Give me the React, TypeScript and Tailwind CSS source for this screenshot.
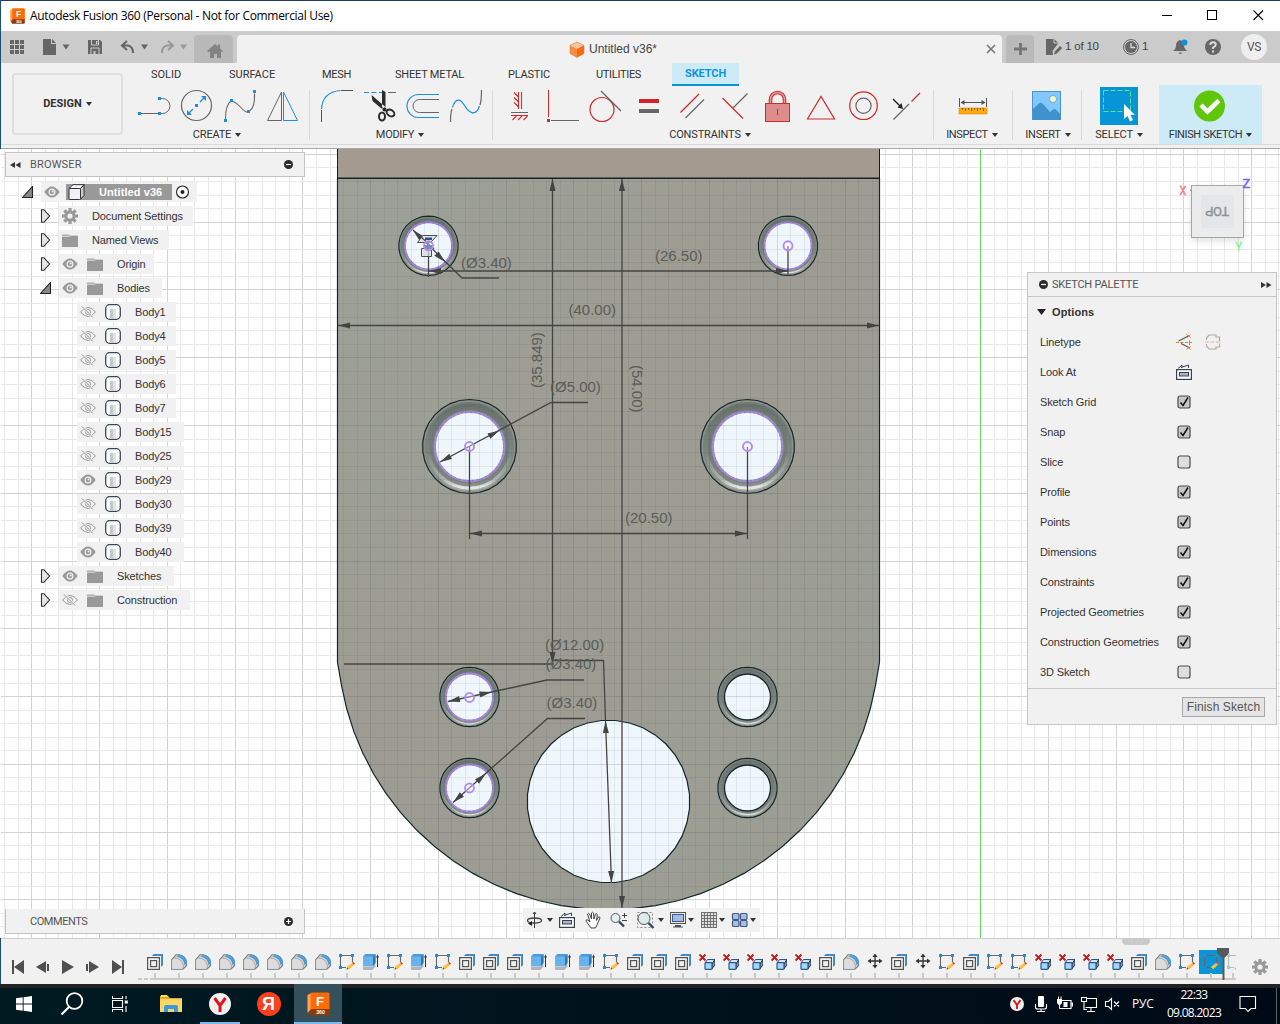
import React from "react";

type BoxProps = { b: string; children?: React.ReactNode; className?: string };

/* Icon whose viewBox also sets its pixel size. */
function Ic({ b, children, className = "" }: BoxProps) {
  const [, , w, h] = b.split(" ");
  return (
    <svg viewBox={b} width={w} height={h} fill="none" className={`block shrink-0 ${className}`}>
      {children}
    </svg>
  );
}

const G = "#666666";
const B = "#1a8fe3";
const R = "#d02a2a";

function Caret() {
  return (
    <svg width="6" height="4" viewBox="0 0 6 4" className="inline-block shrink-0">
      <path d="M0 0h6L3 4z" fill="#333" />
    </svg>
  );
}

/* ---------- window chrome ---------- */

function FusionLogo({ size }: { size: number }) {
  return (
    <svg width={size} height={size + 1} viewBox="0 0 22 24" className="block shrink-0">
      <path d="M0 3l4-2v16l-4 4z" fill="#ffa552" />
      <rect x="3" y="0.5" width="19" height="18" rx="1.5" fill="#ff6b00" />
      <path d="M1 20l3-3h18v5q0 1.5-1.5 1.5H3z" fill="#8f3a04" />
      <text x="12.6" y="13.8" textAnchor="middle" fontFamily="Liberation Sans, sans-serif" fontWeight="700" fontSize="13" fill="#fff">F</text>
      <text x="13" y="22.3" textAnchor="middle" fontFamily="Liberation Sans, sans-serif" fontWeight="700" fontSize="5.2" fill="#fff">360</text>
    </svg>
  );
}

function TitleBar() {
  return (
    <div className="flex h-[31px] shrink-0 items-center border-t border-[#1d3f63] bg-white pl-[9px] text-black">
      <FusionLogo size={15} />
      <span className="ml-[5px] flex-1 whitespace-nowrap font-['Open_Sans',sans-serif] text-[12px] tracking-[-0.31px]">
        Autodesk Fusion 360 (Personal - Not for Commercial Use)
      </span>
      <Ic b="1150 0 130 30">
        <g stroke="#000" strokeWidth="1" shapeRendering="crispEdges">
          <path d="M1162 14.500h10" />
          <rect x="1207.500" y="9.500" width="9" height="9" />
        </g>
        <path d="M1253.500 9.500l9.500 9.500M1263 9.500l-9.500 9.500" stroke="#000" strokeWidth="1.100" />
      </Ic>
    </div>
  );
}

function TabBar() {
  return (
    <div className="flex h-8 shrink-0 items-end bg-[#cbcbcb] text-[12px] text-[#444]">
      <Ic b="1 31 38 32">
        {[0, 1, 2].map((r) =>
          [0, 1, 2].map((c) => <rect key={`${r}${c}`} x={10 + c * 5} y={40 + r * 5} width="4" height="4" fill={G} />)
        )}
      </Ic>
      <Ic b="39 31 38 32">
        <path d="M43 39h8v5h5v11H43zM52 39l4 4h-4z" fill={G} />
        <path d="M62.500 44.500h7l-3.500 5z" fill={G} />
      </Ic>
      <Ic b="77 31 38 32">
        <path d="M88 40h12l2 2v12H88z" fill={G} />
        <path d="M91.500 40v5h7v-5M91 54v-6h8v6" stroke="#cbcbcb" strokeWidth="1" />
        <path d="M96 41h1.500v3H96zM93.500 51h2v3h-2z" fill="#cbcbcb" />
      </Ic>
      <Ic b="115 31 40 32">
        <path d="M127 41l-5 4.500 5 4.500M122 45.500h6q5 1 5 7.500" stroke={G} strokeWidth="2" />
        <path d="M141 44.500h7l-3.500 5z" fill={G} />
      </Ic>
      <Ic b="155 31 39 32">
        <path d="M168 41l5 4.500-5 4.500M173 45.500h-6q-5 1-5 7.500" stroke="#999" strokeWidth="2" />
        <path d="M180 44.500h7l-3.500 5z" fill="#999" />
      </Ic>
      <div className="mr-1 flex h-7 w-[39px] items-center justify-center rounded-t bg-[#b9b9b9] pl-[3px] pt-0.5">
        <Ic b="206 42 18 16">
          <path d="M207 51l8-7 3 2.500v-2h2v4l3 2.500-1 1-1-.8V58h-4v-4h-3v4h-4v-6.800l-1.500 1z" fill="#838383" />
        </Ic>
      </div>
      <div className="flex h-7 w-[765px] items-center rounded-t bg-[#f1f1f1]">
        <div className="flex flex-1 items-center justify-center gap-1 pl-[5px]">
          <Ic b="569 41 16 17">
            <path d="M577 42l7 3.500v8l-7 4-7-4v-8z" fill="#ff8a3a" />
            <path d="M570 45.500l7-3.500 7 3.500-7 3.500z" fill="#fcc79c" />
            <path d="M577 49l7-3.500v8l-7 4z" fill="#f46c0e" />
            <path d="M577 42l7 3.500v8l-7 4-7-4v-8z" stroke="#c98a5c" strokeWidth=".6" />
          </Ic>
          <span>Untitled v36*</span>
        </div>
        <Ic b="984 42 18 14">
          <path d="M987 45l8 8M995 45l-8 8" stroke="#777" strokeWidth="1.600" />
        </Ic>
      </div>
      <div className="ml-1 flex h-7 w-7 items-center justify-center rounded-t bg-[#bababa]">
        <Ic b="0 0 14 14"><path d="M7.500 1v12M1 7h13" stroke="#777" strokeWidth="3" /></Ic>
      </div>
      <div className="flex h-8 shrink-0 items-center">
        <Ic b="1034 31 29 32">
          <path d="M1046 39h8l4.500 4-6 8 .5 4h-7z" fill={G} />
          <path d="M1054 39v4h5" stroke="#cbcbcb" />
          <path d="M1054 54.500l.8-3 5.200-5.500 2.200 2-5.400 5.500z" fill={G} />
        </Ic>
        <span className="ml-[2px] w-[57px] shrink-0 whitespace-nowrap text-[11.500px] tracking-[-0.2px]">1 of 10</span>
        <Ic b="1122 31 18 32">
          <circle cx="1131" cy="47" r="7.500" stroke={G} />
          <circle cx="1131" cy="47" r="6" fill={G} />
          <path d="M1131 43v4.500h4" stroke="#ddd" strokeWidth="1.300" />
        </Ic>
        <span className="ml-0.5 w-[28px] shrink-0 text-[11.500px]">1</span>
        <Ic b="1170 31 28 32">
          <path d="M1173 51q3-2 3-6 .5-4 4-5 3.500 1 4 5 0 4 3.500 6zM1178.500 52.500h3.500q-1.700 3-3.500 0z" fill={G} />
          <circle cx="1184.500" cy="42.500" r="3" fill="#0a94dd" />
        </Ic>
        <Ic b="1198 31 27 32">
          <circle cx="1213" cy="47" r="8" fill={G} />
          <path d="M1210.300 45q0-2.700 2.700-2.700 2.800 0 2.800 2.300 0 1.500-2.700 3v1.400" stroke="#ddd" strokeWidth="1.900" />
          <rect x="1212" y="50.500" width="2" height="2" fill="#ddd" />
        </Ic>
        <span className="ml-[16px] flex h-[26px] w-[26px] shrink-0 items-center justify-center rounded-full bg-[#efefef] font-[Roboto,sans-serif] text-[12px] tracking-[-0.3px] text-[#555]">VS</span>
      </div>
    </div>
  );
}

/* ---------- ribbon ---------- */

type GroupProps = { label: string; w: string; shift?: string; children: React.ReactNode };

function Group({ label, w, shift = "tracking-[-0.2px]", children }: GroupProps) {
  return (
    <div className={`flex flex-col items-center ${w}`}>
      <div className="flex h-[38px] w-full justify-center">{children}</div>
      <div className={`mt-px flex h-[18px] items-center gap-1 whitespace-nowrap ${shift}`}>
        <span>{label}</span>
        <Caret />
      </div>
    </div>
  );
}

const Sep = () => <div className="mt-[3px] h-[50px] w-px shrink-0 bg-[#d9d9d9]" />;

function Sq({ x, y, c = B }: { x: number; y: number; c?: string }) {
  return <rect x={x - 1.5} y={y - 1.5} width="3" height="3" fill={c} />;
}

function Ribbon() {
  return (
    <div className="flex h-[86px] shrink-0 border-b border-[#a9a9a9] bg-[#f1f1f1] font-[Roboto,sans-serif] text-[11px] text-[#333]">
      <div className="flex h-[82px] flex-1 border-b border-[#dadada]">
        <div className="ml-[11px] mt-[10px] flex h-[62px] w-[111px] items-center justify-center gap-1 rounded border-2 border-[#dedede] text-[11px] font-bold">
          DESIGN <Caret />
        </div>
        <div className="flex flex-1 flex-col">
          <div className="flex h-[23px] items-center leading-[22px]">
            <span className="ml-[28px] w-[78px]">SOLID</span>
            <span className="w-[93px]">SURFACE</span>
            <span className="w-[73px] tracking-[-0.3px]">MESH</span>
            <span className="w-[113px] tracking-[-0.2px]">SHEET METAL</span>
            <span className="w-[88px] tracking-[-0.2px]">PLASTIC</span>
            <span className="w-[76px] tracking-[-0.3px]">UTILITIES</span>
            <span className="h-full w-[67px] border-b-2 border-[#0696d7] bg-[#cdeaf7] text-center font-bold tracking-[-0.1px] text-[#0a96dd]">SKETCH</span>
          </div>
          <div className="flex pt-px">
            <Group label="CREATE" w="w-[186px] pl-1" shift="-ml-0.5 tracking-[-0.2px]">
              <Ic b="133 87 41 38">
                <path d="M141 113.500h17M161 98.500h1.500a7.500 7.500 0 0 1 0 15H161" stroke={G} />
                <Sq x={139.500} y={113.500} /><Sq x={159.500} y={113.500} /><Sq x={159.500} y={98.500} />
              </Ic>
              <Ic b="174 87 45 38">
                <circle cx="196.500" cy="105.500" r="15" stroke={G} strokeWidth="1.200" />
                <path d="M189 113l4-4M200 102l4-4" stroke={B} strokeWidth="1.200" />
                <path d="M187 115v-5l5 5zM206 96v5l-5-5z" fill={B} />
                <Sq x={196.500} y={105.500} />
              </Ic>
              <Ic b="219 87 43 38">
                <path d="M225.500 119q0-14 5-17.500M233 101.500q4 1.500 8 6t6 4.500M250 110.500q5-3 4.500-17" stroke={G} strokeWidth="1.100" />
                <Sq x={225.500} y={120.500} /><Sq x={231.500} y={100.500} /><Sq x={248.500} y={111.500} /><Sq x={254.500} y={91.500} />
              </Ic>
              <Ic b="262 87 41 38">
                <path d="M281.500 92v28.500h-14z" stroke={G} />
                <path d="M283.500 92v28.500h14z" stroke={B} />
              </Ic>
            </Group>
            <Sep />
            <Group label="MODIFY" w="w-[182px]" shift="-ml-0.5 tracking-[-0.3px]">
              <Ic b="316 87 42 38">
                <path d="M321.500 122v-12M341 90.500h12" stroke="#555" />
                <path d="M321.500 109q1-17 19-18.500" stroke={B} strokeWidth="1.200" />
              </Ic>
              <Ic b="358 87 44 38">
                <path d="M364 92.500h21" stroke={B} strokeDasharray="5 2.500" />
                <path d="M388 92.500h8" stroke={G} />
                <path d="M382 90l3.500 2v15l-1.500 2-2-2zM371.500 95l1 6 9 7.500 4.500-1z" fill="#2b2b2b" />
                <ellipse cx="382" cy="116.500" rx="3" ry="4" stroke="#2b2b2b" strokeWidth="2" />
                <ellipse cx="390.500" cy="113" rx="4.200" ry="3" stroke="#2b2b2b" strokeWidth="2" transform="rotate(35 390.500 113)" />
                <circle cx="384.500" cy="109.500" r="2" fill="#2b2b2b" />
              </Ic>
              <Ic b="402 87 42 38">
                <path d="M439 94.500h-20.500a11.500 11.500 0 0 0 0 23H439" stroke={B} strokeWidth="1.200" />
                <path d="M439 99.500h-19.500a6.500 6.500 0 0 0 0 13H439" stroke={G} />
              </Ic>
              <Ic b="444 87 42 38">
                <path d="M450.500 122q0-9 1.500-13M480 105q1.500-4 1.500-15" stroke={G} strokeWidth="1.200" />
                <path d="M452.500 107.500c3-10 8-9 12-2s11 12 15 .5" stroke={B} strokeWidth="1.200" />
              </Ic>
            </Group>
            <Sep />
            <Group label="CONSTRAINTS" w="w-[440px]" shift="-ml-[6px] tracking-[-0.15px]">
              <Ic b="499 87 42 38">
                <path d="M521.500 92v17M511 112.500h17" stroke={G} strokeWidth="1.200" />
                <path d="M518.500 92v17M514 92.500l4.500 4.500M514 97.500l4.500 4.500M514 102.500l4.500 4.500M511 115.500h17M512.500 120l4-4M518 120l4-4M523.500 120l4-4" stroke={R} strokeWidth="1.100" />
              </Ic>
              <Ic b="541 87 46 38">
                <path d="M548.500 90v27" stroke={R} /><Sq x={548.500} y={120.500} c={R} />
                <path d="M551 120.500h28" stroke={G} />
              </Ic>
              <Ic b="587 87 44 38">
                <circle cx="602" cy="109.500" r="12" stroke={R} strokeWidth="1.200" />
                <path d="M601 91l20 20" stroke={G} strokeWidth="1.200" />
              </Ic>
              <Ic b="631 87 42 38">
                <rect x="639" y="99" width="20" height="4" fill="#cf2727" />
                <rect x="639" y="109" width="20" height="4" fill={G} />
              </Ic>
              <Ic b="673 87 42 38">
                <path d="M680.500 112.500l18.500-18.500" stroke={R} strokeWidth="1.200" />
                <path d="M685.500 118l18.500-18.500" stroke={G} strokeWidth="1.200" />
              </Ic>
              <Ic b="715 87 42 38">
                <path d="M722.500 98l20.500 20.500" stroke={R} strokeWidth="1.200" />
                <path d="M733 108l14.500-14.500" stroke={G} strokeWidth="1.200" />
              </Ic>
              <Ic b="757 87 42 38">
                <path d="M770.500 103v-3.500a7 7 0 0 1 14 0v3.500" stroke={R} strokeWidth="3.600" />
                <path d="M770.500 103v-3.500a7 7 0 0 1 14 0v3.500" stroke="#e49a9a" strokeWidth="1.500" />
                <rect x="765.500" y="103.500" width="24" height="18" fill="#df8c8c" stroke={R} />
                <path d="M777.500 109v6" stroke={R} />
              </Ic>
              <Ic b="799 87 43 38"><path d="M807.500 119h27l-13.500-22.500z" stroke={R} strokeWidth="1.200" /></Ic>
              <Ic b="842 87 42 38">
                <circle cx="863.500" cy="105.700" r="13.800" stroke={R} strokeWidth="1.200" />
                <circle cx="863.500" cy="105.700" r="7.600" stroke={G} strokeWidth="1.200" />
              </Ic>
              <Ic b="884 87 43 38">
                <path d="M893.500 119.500l15.500-15.500" stroke={G} strokeWidth="1.200" />
                <path d="M911.500 101.500l8.500-8.500" stroke={R} strokeWidth="1.200" />
                <path d="M893 99l7 7" stroke="#222" strokeWidth="1.400" />
                <path d="M903 109l-5.500-1.500 4-4.500z" fill="#222" />
              </Ic>
            </Group>
            <Sep />
            <Group label="INSPECT" w="w-[78px]" shift="-ml-0.5 tracking-[-0.35px]">
              <Ic b="957 87 32 38">
                <path d="M959.500 98v9M986.500 98v9M961 102.500h24" stroke="#555" />
                <path d="M960.500 102.500l4-2.500v5zM985.500 102.500l-4-2.500v5z" fill="#555" />
                <rect x="959" y="108" width="28" height="6" fill="#ffab0d" stroke="#d98a00" strokeWidth=".6" />
                <path d="M962.500 108v2M965.500 108v3M968.500 108v2M971.500 108v3M974.500 108v2M977.500 108v3M980.500 108v2M983.500 108v3" stroke="#7a5200" strokeWidth=".8" />
              </Ic>
            </Group>
            <Sep />
            <Group label="INSERT" w="w-[68px]" shift="ml-0.5 tracking-[-0.2px]">
              <Ic b="1031 87 32 38">
                <rect x="1032.500" y="91.500" width="28" height="28" fill="#80c8ff" stroke="#4a94cc" />
                <path d="M1033 109l6-5.500q2-1.500 4 .5l7 8 3-2.500 2-.5 5.500 5v6H1033z" fill="#3f92cc" />
                <circle cx="1053" cy="99" r="3.500" fill="#f6f6cc" stroke="#5f9ab8" strokeWidth=".7" />
              </Ic>
            </Group>
            <Sep />
            <Group label="SELECT" w="w-[77px]" shift="-ml-[3px] tracking-[-0.15px]">
              <Ic b="1100 87 38 38" className="-ml-[3px] bg-[#0696d7]">
                <rect x="1103.500" y="90.500" width="27" height="21" stroke="#5fe08a" strokeDasharray="5 2" />
                <path d="M1124 104v15l3.500-3 2.500 5.500 3-1.500-2.500-5h4.500z" fill="#fff" />
              </Ic>
            </Group>
            <div className="-mt-[2px] flex h-[59px] flex-col items-center bg-[#cdeaf7] pt-[2px]">
              <Group label="FINISH SKETCH" w="w-[103px]" shift="tracking-[-0.35px]">
                <Ic b="1193 87 34 38" className="-ml-px">
                  <circle cx="1209.500" cy="106" r="15.500" fill="#5fc60a" />
                  <path d="M1201 105l6.500 6.500L1219 100.500" stroke="#fff" strokeWidth="4.500" />
                </Ic>
              </Group>
            </div>
          </div>
        </div>
      </div>
    </div>
  );
}

/* ---------- drawing canvas ---------- */

function poly(cx: number, cy: number, r: number, n: number) {
  return Array.from({ length: n }, (_, i) => {
    const a = ((i + 0.5) * 2 * Math.PI) / n;
    return `${(cx + r * Math.cos(a)).toFixed(1)},${(cy + r * Math.sin(a)).toFixed(1)}`;
  }).join(" ");
}

function lines(origin: number, from: number, to: number) {
  const out: { p: number; major: boolean }[] = [];
  const step = 13.554;
  const first = Math.ceil((from - origin) / step);
  for (let i = first; origin + i * step <= to; i++) out.push({ p: Math.floor(origin + i * step) + 0.5, major: i % 5 === 0 });
  return out;
}

function Arrow({ x, y, a }: { x: number; y: number; a: number }) {
  return <path d="M0 0l-12-3v6z" transform={`translate(${x} ${y}) rotate(${a})`} fill="#444443" />;
}

type HoleProps = { x: number; y: number; o: number; i: number; sel?: boolean };

function Hole({ x, y, o, i, sel = true }: HoleProps) {
  const t = o - i;
  return (
    <g>
      <polygon points={poly(x, y, o, 30)} fill="#8e928b" stroke="#15262b" strokeWidth="1.200" />
      <circle cx={x} cy={y} r={i + t * 0.5} fill="none" stroke="url(#bevel)" strokeWidth={t * 0.6} />
      <circle cx={x} cy={y} r={i + t * 0.75} fill="none" stroke="#7c827c" strokeOpacity=".6" strokeWidth="1.500" />
      <circle cx={x} cy={y} r={i + t * 0.28} fill="none" stroke="#6f7874" strokeOpacity=".75" strokeWidth={t * 0.3} />
      <circle cx={x} cy={y} r={i} fill="#eff7fd" stroke={sel ? "#a78be6" : "#15262b"} strokeWidth={sel ? 1.8 : 1.3} />
      {sel && <circle cx={x} cy={y} r={i - 0.3} fill="none" stroke="#6a4fb0" strokeOpacity=".55" strokeWidth=".8" strokeDasharray="1.500 3" />}
    </g>
  );
}

/* Plate silhouette: straight flanks closed by a faceted half circle. */
const outline = (() => {
  const pts = ["337.5,178.5"];
  for (let d = 5; d <= 175; d += 5) {
    const a = (d * Math.PI) / 180;
    const x = d === 5 ? 337.5 : d === 175 ? 879.5 : 608.5 - 271 * Math.cos(a);
    pts.push(`${x.toFixed(1)},${(638.7 + 271 * Math.sin(a)).toFixed(1)}`);
  }
  pts.push("879.5,178.5");
  return pts.join(" ");
})();

const dims: [string, number, number, number][] = [
  ["(Ø3.40)", 461, 267.500, 0],
  ["(26.50)", 655, 260.500, 0],
  ["(40.00)", 568.500, 315, 0],
  ["(Ø5.00)", 550, 391.500, 0],
  ["(20.50)", 625, 523, 0],
  ["(Ø12.00)", 545, 650, 0],
  ["(Ø3.40)", 545.500, 669, 0],
  ["(Ø3.40)", 546.500, 708, 0],
  ["(35.849)", 541.500, 388, -90],
  ["(54.00)", 632, 365, 90],
];

const centers = [
  [428.500, 245.800], [788, 245.800], [469.500, 446.500], [747.500, 446.500], [469.500, 697.500], [469.500, 788],
];

function Drawing() {
  const xs = lines(980.6, 2, 1280);
  const ys = lines(154.4, 149, 938);
  return (
    <svg viewBox="0 149 1280 789" width="1280" height="789" className="absolute inset-0 block">
      <defs>
        <linearGradient id="bevel" x1="0" y1="0" x2="0" y2="1">
          <stop offset="0" stopColor="#68706c" />
          <stop offset="0.6" stopColor="#7f8681" />
          <stop offset="0.9" stopColor="#b0b4ae" />
          <stop offset="1" stopColor="#e4e6e3" />
        </linearGradient>
        <linearGradient id="plate" x1="0" y1="0" x2="1" y2="1">
          <stop offset="0" stopColor="#9da197" />
          <stop offset="0.45" stopColor="#9d9c92" />
          <stop offset="1" stopColor="#9b9e94" />
        </linearGradient>
      </defs>
      <rect x="0" y="149" width="1280" height="789" fill="#fff" />
      <rect x="337.500" y="140" width="542" height="38" fill="#a59a90" stroke="#1c1c1c" />
      <g shapeRendering="crispEdges">
        {[...xs].sort((a, b) => Number(a.major) - Number(b.major)).map((l) => (
          <path key={`x${l.p}`} d={`M${l.p} ${l.p > 337 && l.p < 880 ? 640 : 149}V938`} stroke={l.major ? "#d3d3d3" : "#e9e9e9"} />
        ))}
        {[...ys].sort((a, b) => Number(a.major) - Number(b.major)).map((l) => (
          <path key={`y${l.p}`} d={l.p > 179 ? `M1 ${l.p}h1279` : `M1 ${l.p}h336M880 ${l.p}h400`} stroke={l.major ? "#d3d3d3" : "#e9e9e9"} />
        ))}
      </g>
      <polygon points={outline} fill="url(#plate)" stroke="#15262b" strokeWidth="1.200" />
      <Hole x={428.500} y={245.800} o={29.700} i={23.500} />
      <Hole x={788} y={245.800} o={29.700} i={23.500} />
      <Hole x={469.500} y={446.500} o={47} i={34.500} />
      <Hole x={747.500} y={446.500} o={47} i={34.500} />
      <Hole x={469.500} y={697} o={29.700} i={23.500} />
      <Hole x={469.500} y={788} o={29.700} i={23.500} />
      <Hole x={747.500} y={697} o={29.700} i={23} sel={false} />
      <Hole x={747.500} y={788} o={29.700} i={23} sel={false} />
      <polygon points={poly(608.5, 801.5, 81.3, 36)} fill="#eff7fd" stroke="#15262b" strokeWidth="1.200" />
      <clipPath id="inside"><polygon points={outline} /></clipPath>
      <g shapeRendering="crispEdges" clipPath="url(#inside)" stroke="#3c4e56">
        {xs.filter((l) => l.p > 337 && l.p < 880).map((l) => (
          <path key={`p${l.p}`} d={`M${l.p} 179v759`} strokeOpacity={l.major ? 0.18 : 0.09} />
        ))}
        {ys.filter((l) => l.p > 179).map((l) => (
          <path key={`q${l.p}`} d={`M338 ${l.p}h541`} strokeOpacity={l.major ? 0.18 : 0.09} />
        ))}
      </g>
      <path d="M980.500 149v789" stroke="#62dd62" shapeRendering="crispEdges" />
      <g stroke="#444443" strokeWidth="1.300" fill="none">
        <path d="M337.500 325.500h542M622 179v729M552.500 179v484" />
        <path d="M429 271h359M428.500 246v31M788 246v30" />
        <path d="M413 230l49 48h37" />
        <path d="M469.500 447v92M747.500 447v92M470 533.500h277" />
        <path d="M440 462l111-59.500h37" />
        <path d="M344 664h210M552 660.500h51.500l2 60M605.500 721l6 162" />
        <path d="M448 701.500L547 680h37M453 802.500l94.500-84h37.500" />
      </g>
      <Arrow x={338} y={325.500} a={180} /><Arrow x={879} y={325.500} a={0} />
      <Arrow x={622} y={179} a={-90} /><Arrow x={622} y={908} a={90} />
      <Arrow x={552.500} y={179} a={-90} /><Arrow x={552.500} y={664} a={90} />
      <Arrow x={429} y={271} a={180} /><Arrow x={788} y={271} a={0} />
      <Arrow x={470} y={533.500} a={180} /><Arrow x={747} y={533.500} a={0} />
      <Arrow x={440} y={462} a={152} /><Arrow x={499.500} y={430.500} a={-28} />
      <Arrow x={413} y={230} a={225} /><Arrow x={445} y={262} a={45} />
      <Arrow x={448} y={701.500} a={168} /><Arrow x={491.500} y={692} a={-12} />
      <Arrow x={453} y={802.500} a={138} /><Arrow x={486} y={773.500} a={-42} />
      <Arrow x={605.500} y={721} a={-92} /><Arrow x={611.500} y={883} a={88} />
      <g stroke="#4a4f4d" fill="none">
        <path d="M417.500 242.500h13l6.500-7h-14z" fill="#e6e9ec" />
        <path d="M421.500 248.500h10v8h-10z" fill="#d9dcdc" fillOpacity=".7" />
        <path d="M420 236l14 13" strokeWidth="1.300" />
      </g>
      <path d="M425 237.500h7v2.500h-7zM424 245h9v3h-9z" fill="#2f4f8f" />
      {centers.map(([x, y]) => (
        <circle key={`${x}-${y}`} cx={x} cy={y} r="4.500" fill="#fff" fillOpacity=".35" stroke="#b48cf0" strokeWidth="1.900" />
      ))}
      <g fontFamily="Liberation Sans, Arial, sans-serif" fontSize="15" fill="#5a5c59">
        {dims.map(([t, x, y, a]) => (
          <text key={`${t}${y}`} transform={`translate(${x} ${y}) rotate(${a})`}>{t}</text>
        ))}
      </g>
    </svg>
  );
}

/* ---------- browser tree ---------- */

function Eye({ off = false }: { off?: boolean }) {
  return off ? (
    <Ic b="0 0 16 12">
      <path d="M0.500 6q7.500-9 15 0-7.500 9-15 0z" stroke="#9a9a9a" />
      <circle cx="8" cy="6" r="2.500" stroke="#9a9a9a" />
      <path d="M2 0.500l11.500 11" stroke="#f1f1f1" strokeWidth="2.400" />
      <path d="M2 0.500l11 11" stroke="#8a8a8a" strokeWidth=".9" />
    </Ic>
  ) : (
    <Ic b="0 0 16 12">
      <path d="M0.300 6q7.700-11 15.400 0-7.700 11-15.400 0z" fill="#999" />
      <circle cx="8" cy="6" r="2.900" stroke="#f1f1f1" strokeWidth="1.200" />
      <circle cx="8.600" cy="5.500" r="1" fill="#f1f1f1" />
    </Ic>
  );
}

function Folder() {
  return (
    <Ic b="0 0 16 13">
      <path d="M0 0.500h7l1 1h8v1H0z" fill="#b0b0b0" />
      <path d="M0 3h7l2-1h7v11H0z" fill="#999" />
    </Ic>
  );
}

function Body() {
  return (
    <Ic b="0 0 16 16">
      <rect x="0.700" y="0.700" width="14.600" height="14.600" rx="4" fill="#fff" stroke="#3a4556" strokeWidth="1.300" />
      <rect x="5" y="5" width="3.500" height="9" fill="#c3c7cb" />
      <rect x="8.500" y="5" width="2.500" height="9" fill="#e0e2e4" />
    </Ic>
  );
}

function Gear({ size, hole }: { size: number; hole: string }) {
  return (
    <svg width={size} height={size} viewBox="0 0 16 16" className="block shrink-0">
      {[0, 45, 90, 135].map((a) => (
        <rect key={a} x="6.400" y="0" width="3.200" height="16" fill="#999" transform={`rotate(${a} 8 8)`} />
      ))}
      <circle cx="8" cy="8" r="5.500" fill="#999" />
      <circle cx="8" cy="8" r="2.600" fill={hole} />
    </svg>
  );
}

const Closed = () => (
  <Ic b="0 0 12 14"><path d="M1.500 0.800v12.400h2.500L9.500 7 4 0.800z" fill="#e6e6e6" stroke="#333" strokeWidth="1.100" /></Ic>
);
const Opened = () => (
  <Ic b="0 0 12 12"><path d="M10.500 0.500v11H0.500z" fill="#888" stroke="#222" strokeWidth="1.100" /></Ic>
);

type RowData = { t: string; kind: "set" | "views" | "folder" | "body"; on?: boolean; open?: boolean; w: string };

const rows: RowData[] = [
  { t: "Document Settings", kind: "set", w: "w-[134px]" },
  { t: "Named Views", kind: "views", w: "w-[110px]" },
  { t: "Origin", kind: "folder", on: true, w: "w-[95px]" },
  { t: "Bodies", kind: "folder", on: true, open: true, w: "w-[103px]" },
  { t: "Body1", kind: "body", w: "w-[99px]" },
  { t: "Body4", kind: "body", w: "w-[99px]" },
  { t: "Body5", kind: "body", w: "w-[99px]" },
  { t: "Body6", kind: "body", w: "w-[99px]" },
  { t: "Body7", kind: "body", w: "w-[99px]" },
  { t: "Body15", kind: "body", w: "w-[107px]" },
  { t: "Body25", kind: "body", w: "w-[107px]" },
  { t: "Body29", kind: "body", on: true, w: "w-[107px]" },
  { t: "Body30", kind: "body", w: "w-[107px]" },
  { t: "Body39", kind: "body", w: "w-[107px]" },
  { t: "Body40", kind: "body", on: true, w: "w-[107px]" },
  { t: "Sketches", kind: "folder", on: true, w: "w-[115px]" },
  { t: "Construction", kind: "folder", w: "w-[131px]" },
];

function TreeRow({ r }: { r: RowData }) {
  if (r.kind === "body")
    return (
      <div className="flex h-5 items-center pl-[72px]">
        <div className={`flex h-5 items-center bg-[#f1f1f1] pl-[3px] ${r.w}`}>
          <Eye off={!r.on} />
          <span className="ml-[9px] mr-[14px]"><Body /></span>
          {r.t}
        </div>
      </div>
    );
  return (
    <div className="flex h-5 items-center pl-[35px]">
      <span className="w-[19px]">{r.open ? <Opened /> : <Closed />}</span>
      <div className={`flex h-5 items-center whitespace-nowrap bg-[#f1f1f1] pl-[3px] ${r.w}`}>
        {r.kind === "set" && <span className="mr-[14px]"><Gear size={16} hole="#f1f1f1" /></span>}
        {r.kind === "views" && <span className="mr-[14px]"><Folder /></span>}
        {r.kind === "folder" && (
          <>
            <Eye off={!r.on} />
            <span className="ml-[9px] mr-[14px]"><Folder /></span>
          </>
        )}
        {r.t}
      </div>
    </div>
  );
}

const Round = ({ plus = false }: { plus?: boolean }) => (
  <Ic b="0 0 9 9">
    <circle cx="4.500" cy="4.500" r="4.500" fill="#2b2b2b" />
    <path d={plus ? "M2 4.500h5M4.500 2v5" : "M2 4.500h5"} stroke="#fff" strokeWidth="1.200" />
  </Ic>
);

function BrowserPanel() {
  return (
    <div className="relative flex w-[300px] flex-col text-[11px] tracking-[-0.12px] text-[#333]">
      <div className="flex h-[25px] items-center border border-[#c4c4c4] bg-[#f1f1f1] pl-1 pr-[11px] font-[Roboto,sans-serif] tracking-[0.15px] text-[#555]">
        <Ic b="0 0 11 6"><path d="M5 0v6L0 3zM10.500 0v6l-5-3z" fill="#333" /></Ic>
        <span className="ml-[9px] flex-1 pt-0.5">BROWSER</span>
        <Round />
      </div>
      <div className="flex flex-col gap-1 pt-[5px]">
        <div className="flex h-5 items-center pl-[17px]">
          <span className="w-[19px]"><Opened /></span>
          <div className="flex h-5 w-[156px] items-center bg-[#f1f1f1] pl-[3px]">
            <Eye />
            <div className="ml-[6px] flex h-4 w-[106px] items-center bg-[#999] pl-[2px]">
              <Ic b="0 0 17 16">
                <path d="M1 4.500L5 .7h11l-3.500 3.800z" fill="#fff" stroke="#333" />
                <path d="M12.500 4.500L16 .7v10.800l-3.500 3.800z" fill="#c9ccd1" stroke="#333" />
                <rect x="1" y="4.500" width="11.500" height="11" rx="1" fill="#f1f1f5" stroke="#333" />
              </Ic>
              <span className="ml-[14px] whitespace-nowrap font-bold tracking-[0.08px] text-white">Untitled v36</span>
            </div>
            <Ic b="0 0 21 14">
              <circle cx="10.500" cy="7" r="6" fill="#fff" stroke="#222" strokeWidth="1.100" />
              <circle cx="10.500" cy="7" r="2" fill="#222" />
            </Ic>
          </div>
        </div>
        {rows.map((r) => <TreeRow key={r.t} r={r} />)}
      </div>
    </div>
  );
}

/* ---------- sketch palette ---------- */

function Check({ on }: { on: boolean }) {
  return (
    <Ic b="0 0 14 14">
      <rect x="1" y="1" width="12" height="12" rx="2" fill={on ? "#c6c6c6" : "#dedede"} stroke="#4a4a4a" strokeWidth="1.200" />
      {on && <path d="M3.500 7.500l2.500 3 5-8" stroke="#111" strokeWidth="1.500" />}
    </Ic>
  );
}

function LookAt() {
  return (
    <Ic b="0 0 16 16">
      <rect x="0.600" y="5.600" width="14.800" height="9.800" fill="#fff" stroke="#3a4250" strokeWidth="1.200" />
      <rect x="3.500" y="8.500" width="9" height="3.500" fill="#aab4c4" stroke="#3a4250" />
      <path d="M2 4.500L6 1v2.500M5 3.500L12.500 1v3" stroke="#3a4250" />
    </Ic>
  );
}

const toggles: [string, boolean][] = [
  ["Sketch Grid", true], ["Snap", true], ["Slice", false], ["Profile", true], ["Points", true], ["Dimensions", true],
  ["Constraints", true], ["Projected Geometries", true], ["Construction Geometries", true], ["3D Sketch", false],
];

function Palette() {
  return (
    <div className="flex h-[453px] w-[250px] flex-col border border-[#c6c6c6] bg-[#f1f1f1] text-[11px] tracking-[-0.12px] text-[#333]">
      <div className="flex h-[24px] items-center border-b border-[#c6c6c6] pl-[11px] pr-1 font-[Roboto,sans-serif] tracking-[-0.2px] text-[#555]">
        <Round />
        <span className="ml-1 flex-1 pt-0.5">SKETCH PALETTE</span>
        <Ic b="0 0 11 6"><path d="M0 0v6l5-3zM5.500 0v6l5-3z" fill="#333" /></Ic>
      </div>
      <div className="flex h-[30px] items-center pl-[9px] font-bold tracking-[0.1px]">
        <Ic b="0 0 9 6"><path d="M0 0h9L4.500 6z" fill="#222" /></Ic>
        <span className="ml-1.5">Options</span>
      </div>
      <div className="flex h-[30px] items-center pl-3">
        <span className="w-[136px]">Linetype</span>
        <Ic b="0 0 17 16" className="mr-3">
          <path d="M2.500 7l11-5.500M5 9.500l9 4.500" stroke="#555" strokeWidth="1.200" />
          <path d="M0 8.500h16" stroke="#ec7b28" strokeWidth="1.200" strokeDasharray="3 1.500" />
          <path d="M10.500.5l4 3M14.500 .5l-3 3M10.500 15.500l4-3M14.500 15.500l-3-3M13.500 6v5" stroke="#ec7b28" />
        </Ic>
        <Ic b="0 0 16 16">
          <path d="M1.500 6V4L4 1h7v2h3.500v4M1.500 10v2L4 15h7v-2h3.500V9.500" stroke="#ababab" strokeWidth="1.200" />
          <path d="M0 8h16" stroke="#e8b898" strokeDasharray="4 1.500" />
        </Ic>
      </div>
      <div className="flex h-[30px] items-center pl-3">
        <span className="w-[136px]">Look At</span>
        <LookAt />
      </div>
      {toggles.map(([t, on]) => (
        <div key={t} className="flex h-[30px] items-center whitespace-nowrap pl-3">
          <span className="w-[137px]">{t}</span>
          <Check on={on} />
        </div>
      ))}
      <div className="mt-px flex flex-1 items-start justify-end border-t border-[#c6c6c6] pr-[11px] pt-2">
        <button className="h-5 w-[83px] whitespace-nowrap border border-[#a8a8a8] bg-[#e4e4e4] text-[12px] leading-[18px] tracking-[0.1px] text-[#555]">Finish Sketch</button>
      </div>
    </div>
  );
}

function ViewCube() {
  return (
    <svg width="80" height="80" viewBox="1175 173 80 80" className="block" fontFamily="Roboto, sans-serif">
      <rect x="1191.500" y="185.500" width="52" height="52" fill="#ececec" fillOpacity=".94" stroke="#a6a6a6" className="drop-shadow-md" />
      <rect x="1201" y="195" width="33" height="33" fill="#e4e6e9" />
      <text x="1217.500" y="216" textAnchor="middle" fontSize="13" letterSpacing="-.4" fill="#8e9096" stroke="#8e9096" strokeWidth=".4" transform="rotate(180 1217.500 211.500)">TOP</text>
      <g fontSize="13.500" strokeWidth=".5">
        <text transform="translate(1179.500 194.500) scale(.8 1)" fill="#fb7d7d" stroke="#fb7d7d">X</text>
        <text transform="translate(1242.500 187.500) scale(.95 1)" fill="#6a6af5" stroke="#6a6af5">Z</text>
        <text transform="translate(1235.500 250.500) scale(.8 1)" fill="#7df88a" stroke="#7df88a">Y</text>
      </g>
      <rect x="1190" y="189.500" width="2" height="1.500" fill="#fb7d7d" />
    </svg>
  );
}

function NavBar() {
  return (
    <div className="flex h-6 w-[237px] items-center bg-[#f1f1f1]">
      <Ic b="523 908 36 24">
        <path d="M534.500 913v15M533 914l1.500-2 1.500 2" stroke="#333" />
        <ellipse cx="534.500" cy="920.500" rx="7" ry="2.500" stroke="#444" strokeWidth="1.300" />
        <path d="M528 923.500l4-2.500v5z" fill="#222" />
        <path d="M547 918h6l-3 4z" fill="#333" />
      </Ic>
      <LookAt />
      <Ic b="575 908 32 24">
        <path d="M591 928l-5-7q0-2 2-1l2 2-2.500-8q1-1.500 2 0l2 5v-6q1-1.500 2 0l.5 6 1.500-5q1.500-1 1.800.4l-.8 6 2-3.500q1.500-.5 1.500 1l-3 7-1.500 3z" fill="#fff" stroke="#444" />
      </Ic>
      <Ic b="607 908 26 24">
        <circle cx="615.500" cy="918" r="4.500" fill="#e6f0f2" stroke="#555" />
        <path d="M619 921.500l5 5" stroke="#2f4a5c" strokeWidth="2.400" />
        <path d="M622 915.500h5M624.500 913v5M622 920.500h5" stroke="#444" />
      </Ic>
      <Ic b="633 908 34 24">
        <rect x="637.500" y="912.500" width="15" height="15" stroke="#888" strokeDasharray="2 2" />
        <circle cx="644" cy="918.500" r="6" fill="#dcecec" stroke="#555" />
        <path d="M648.500 923l5 5" stroke="#2f4a5c" strokeWidth="2.400" />
        <path d="M658 918h6l-3 4z" fill="#333" />
      </Ic>
      <Ic b="667 908 30 24">
        <rect x="670.500" y="912.500" width="15" height="11" fill="#e8e8e8" stroke="#555" />
        <rect x="672.500" y="914.500" width="11" height="7" fill="#a5bde0" stroke="#3a5a94" />
        <path d="M675 925h6v1.500h2v1h-10v-1h2z" fill="#555" />
        <path d="M688 918h6l-3 4z" fill="#333" />
      </Ic>
      <Ic b="697 908 31 24">
        <rect x="701.500" y="912.500" width="15" height="15" fill="#ddd" />
        <path d="M701 912.500h16M701 915.500h16M701 918.500h16M701 921.500h16M701 924.500h16M701 927.500h16M701.500 912v16M704.500 912v16M707.500 912v16M710.500 912v16M713.500 912v16M716.500 912v16" stroke="#666" strokeWidth=".9" />
        <path d="M719 918h6l-3 4z" fill="#333" />
      </Ic>
      <Ic b="728 908 32 24">
        {[[732, 913], [740, 913], [732, 920], [740, 920]].map(([x, y]) => (
          <rect key={`${x}${y}`} x={x + 0.5} y={y + 0.5} width="6.500" height="6" rx="1" fill="#a9c0e0" stroke="#3f5a86" strokeWidth="1.200" />
        ))}
        <path d="M750 918h6l-3 4z" fill="#333" />
      </Ic>
    </div>
  );
}

/* ---------- timeline ---------- */

type Step = "shell" | "fillet" | "sketch" | "extrude" | "del" | "move";

const steps: Step[] = [
  "shell", "fillet", "fillet", "fillet", "fillet", "fillet", "fillet", "fillet", "sketch", "extrude", "sketch", "extrude", "sketch",
  "shell", "shell", "shell", "extrude", "extrude", "extrude", "sketch", "shell", "shell", "shell", "del", "del", "del", "del", "del",
  "shell", "fillet", "move", "shell", "move", "sketch", "shell", "sketch", "sketch", "del", "del", "del", "del", "shell", "fillet",
  "sketch", "sketch", "sketch",
];

function StepIcon({ k }: { k: Step }) {
  switch (k) {
    case "shell":
      return (
        <Ic b="0 0 16 16">
          <path d="M5 2l1.500-2H16v11l-2 2V2z" fill="#3f8cc8" />
          <rect x="0.600" y="3.600" width="11.800" height="11.800" fill="#f1f1f1" stroke="#555" strokeWidth="1.200" />
          <rect x="3.600" y="6.600" width="6" height="6" stroke="#555" strokeWidth="1.200" />
        </Ic>
      );
    case "fillet":
      return (
        <Ic b="0 0 16 16">
          <path d="M0.600 15.400V6L5 0.700h3q7 1 7.500 8v3l-4 3.700z" fill="#d6d6d6" stroke="#777" strokeWidth="1.100" />
          <path d="M5.500 2.500L8 0.500q7.500 1 8 8.500l-2.500 2.500q0-7-8-9z" fill="#4c9fdd" />
          <path d="M3 4q8 0 9.500 8l-1 3.400H.6V6z" fill="#dcdcdc" stroke="#888" strokeWidth=".6" />
        </Ic>
      );
    case "sketch":
      return (
        <Ic b="0 0 16 16">
          <path d="M3 1.500h9M1.500 3v9M13.500 3v5M3 13.500h4" stroke="#666" strokeWidth="1.100" />
          <path d="M0 0h3v3H0zM12 0h3v3h-3zM0 12h3v3H0z" fill="#1a8fe3" />
          <path d="M7.500 15.500l1-3 5-4 2 2-5 4.500z" fill="#fbbf3f" />
          <path d="M13 9l1.500-1.200 1.500 1.700-1.300 1.300z" fill="#e8474a" />
          <path d="M7.500 15.500l.6-2 1.500 1.500z" fill="#555" />
        </Ic>
      );
    case "extrude":
      return (
        <Ic b="0 0 16 16">
          <path d="M0 13h9.500l3-3v2.500l-3 3.500H0z" fill="#b4b4b4" />
          <path d="M0 2.500L2.500 0H12.500v9l-2.500 3.500H0z" fill="#6ab2ea" />
          <path d="M0 2.500L2.500 0h10L10 2.500z" fill="#4c9be0" />
          <path d="M10 2.500L12.500 0v9L10 12.500z" fill="#2f78b8" />
          <path d="M14.500 2v11" stroke="#333" />
          <path d="M13 3.500l1.500-3L16 3.500z" fill="#333" />
        </Ic>
      );
    case "del":
      return (
        <Ic b="0 0 16 16">
          <path d="M.5.5l6 6M6.500.5l-6 6" stroke="#c01818" strokeWidth="1.900" />
          <path d="M6 9l2.500-3.500H16L13.500 9z" fill="#dde3ea" stroke="#25548a" />
          <path d="M13.500 9L15.700 5.700v5.500L13 15z" fill="#8a98ab" stroke="#33415a" />
          <rect x="6" y="8.600" width="7" height="6.800" rx="1" fill="#a8d6ef" stroke="#1f5d9c" strokeWidth="1.200" />
        </Ic>
      );
    default:
      return (
        <Ic b="0 0 16 16" className="-translate-y-px">
          <path d="M8 2v12M2 8h12" stroke="#333" strokeWidth="1.300" />
          <path d="M8 0.500l2.600 3.500H5.400zM8 15.500l2.600-3.500H5.400zM.5 8L4 5.400v5.200zM15.500 8L12 5.400v5.200z" fill="#333" />
        </Ic>
      );
  }
}

function Timeline() {
  return (
    <div className="relative flex h-[46px] shrink-0 border-t border-[#cfcfcf] bg-[#f1f1f1]">
      <div className="flex w-[137px] shrink-0">
        <Ic b="1 939 137 45">
          <g fill="#4f4f4f">
            <path d="M12 960h2v14h-2zM24 960v14l-10-7z" />
            <path d="M46 961v12l-10-6zM47 964h2v7h-2z" />
            <path d="M62 960v14l12-7z" />
            <path d="M86 964h2v7h-2zM89 961v12l10-6z" />
            <path d="M112 960v14l10-7zM122 960h2v14h-2z" />
          </g>
        </Ic>
      </div>
      <div className="flex w-[1098px] shrink-0 flex-col overflow-hidden pt-[11px]">
        <div className="flex pl-[5px]">
          {steps.map((k, i) => (
            <div key={i} className="flex w-6 shrink-0 flex-col items-center">
              <div className={`flex h-6 w-6 items-center justify-center ${i === 44 ? "bg-[#0696d7]" : ""} ${i === 45 ? "opacity-40" : ""}`}>
                <StepIcon k={k} />
              </div>
            </div>
          ))}
        </div>
        <div className="-mt-px flex pl-[5px]">
          {steps.slice(0, 45).map((_, i) => (
            <div key={i} className="flex w-6 shrink-0 justify-center"><span className="h-[5px] w-0.5 bg-[#c9c9c9]" /></div>
          ))}
          <span className="ml-[9px] h-[5px] w-0.5 bg-[#c9c9c9]" />
        </div>
        <div className="flex h-0.5 gap-[2px]">
          <span className="w-1 bg-[#c9c9c9]" /><span className="w-1 bg-[#c9c9c9]" /><span className="flex-1 bg-[#c9c9c9]" />
        </div>
      </div>
      <div className="flex flex-1 items-center pl-4 pt-2.5">
        <Gear size={16} hole="#f1f1f1" />
      </div>
      <Ic b="1216 947 14 33" className="absolute left-[1215px] top-[8px]">
        <path d="M1217 948h12v5l-4.500 5V980h-2V958l-5.500-5z" fill="#595959" />
      </Ic>
      <span className="absolute left-[1121px] top-[-1px] h-[7px] w-7 rounded-b-md rounded-t-sm bg-[#cacaca]" />
    </div>
  );
}

/* ---------- taskbar ---------- */

function YaBrowser({ s }: { s: number }) {
  return (
    <svg width={s} height={s} viewBox="0 0 22 22" className="block shrink-0">
      <circle cx="11" cy="11" r="11" fill="#f1f1f1" />
      <path d="M5.500 5l5.500 7.500V19M16.500 5L11 12.500" fill="none" stroke="#e0161f" strokeWidth="3" />
    </svg>
  );
}

function Taskbar() {
  return (
    <div className="flex h-9 shrink-0 items-stretch bg-linear-to-r from-[#001a22] via-[#00131d] to-[#000a16] font-['Open_Sans',sans-serif] text-white">
      <div className="flex w-12 items-center justify-center pb-1">
        <Ic b="0 0 16 16">
          <path d="M0 2.300L6.700 1.300V7.500H0zM7.600 1.200L16 0v7.500H7.600zM0 8.400h6.700v6.300L0 13.700zM7.600 8.400H16V16l-8.400-1.200z" fill="#fff" />
        </Ic>
      </div>
      <div className="flex w-12 items-center justify-center pb-1">
        <Ic b="0 0 24 24">
          <circle cx="14.500" cy="9" r="7.800" stroke="#fff" strokeWidth="1.800" />
          <path d="M9 15l-7.500 7.500" stroke="#fff" strokeWidth="2.200" />
        </Ic>
      </div>
      <div className="flex w-12 items-center justify-center pb-1">
        <Ic b="0 0 16 16">
          <path d="M.5 0v2.500h10V0M.5 16v-2.500h10V16M.5 4.500h10v7H.5zM14 0v3M14 10v6" stroke="#fff" strokeWidth="1.100" />
          <rect x="12.800" y="4.500" width="3" height="3" fill="#fff" />
        </Ic>
      </div>
      <div className="ml-1 flex w-[46px] items-center justify-center pb-1">
        <Ic b="0 0 22 20">
          <path d="M0 2h8l2 2h12v14H0z" fill="#e0a82e" />
          <path d="M1 1h6l1.500 2H1zM0 5h22v13H0z" fill="#ffd765" />
          <path d="M4 18v-5q0-2 2-2h10q2 0 2 2v5h-4v-3H8v3z" fill="#3a9bdc" />
        </Ic>
      </div>
      <div className="ml-[6px] flex w-10 flex-col items-center justify-between pt-[5px]">
        <YaBrowser s={22} />
        <span className="h-0.5 w-10 bg-[#76b9ed]" />
      </div>
      <div className="flex w-[54px] items-start justify-center pl-[3px] pt-1">
        <span className="flex h-6 w-6 items-center justify-center rounded-full bg-[#fc3f1d] font-['Liberation_Sans',sans-serif] text-[18px] font-bold leading-none">Я</span>
      </div>
      <div className="-mt-1 flex w-12 flex-col items-center justify-between bg-[#36505b] pt-2">
        <FusionLogo size={23} />
        <span className="h-0.5 w-12 bg-[#76b9ed]" />
      </div>
      <div className="flex-1" />
      <div className="flex items-center pb-1">
        <YaBrowser s={14} />
        <Ic b="1024 994 30 20">
          <rect x="1038" y="996" width="6" height="11" rx="1" fill="#fff" />
          <path d="M1035.500 1004v3q0 2 2 2h7q2 0 2-2v-3M1041 1009v3M1037 1011.500h8" stroke="#fff" strokeWidth="1.100" />
        </Ic>
        <Ic b="1054 994 24 20">
          <path d="M1062 1000.500h9v8h-10" stroke="#fff" strokeWidth="1.200" />
          <path d="M1063.500 1002h4v5h-4zM1071.500 1002.500h1.500v4h-1.500zM1057 999h5v4q-1 2-2.500 2t-2.500-2z" fill="#fff" />
          <path d="M1058.500 996.500v3M1061 996.500v3M1059.500 1004v4.500h2" stroke="#fff" />
        </Ic>
        <Ic b="1078 994 24 20">
          <path d="M1086 998.500h10.500v9h-11M1091 1008v3M1087 1011.500h8" stroke="#fff" strokeWidth="1.100" />
          <path d="M1081.500 997.500h5v4h-5zM1084 1001.500v8h3" stroke="#fff" strokeWidth="1.100" />
        </Ic>
        <Ic b="1102 994 22 20">
          <path d="M1105.500 1001.500h3l3-3v11l-3-3h-3zM1114 1001.500l5 5M1119 1001.500l-5 5" stroke="#fff" strokeWidth="1.100" />
        </Ic>
        <span className="ml-[8px] w-[34px] text-[12px] tracking-[-0.2px]">РУС</span>
        <div className="flex w-[56px] flex-col items-center whitespace-nowrap text-[12px] leading-[18px] tracking-[-0.7px]">
          <span>22:33</span>
          <span>09.08.2023</span>
        </div>
      </div>
      <div className="flex w-[55px] items-center border-r border-[#5a6268] pb-1 pl-[17px]">
        <Ic b="0 0 18 18"><path d="M1 1.500h15.500v12H12L9 16.500l-2.500-3H1z" stroke="#fff" strokeWidth="1.100" /></Ic>
      </div>
      <div className="w-[3px]" />
    </div>
  );
}

export default function App() {
  return (
    <div className="flex h-[1024px] w-[1280px] flex-col overflow-hidden bg-white font-['Liberation_Sans',Arial,sans-serif] leading-normal">
      <div className="flex h-[984px] shrink-0 flex-col border-l border-[#1b4f72]">
        <TitleBar />
        <TabBar />
        <Ribbon />
        <div className="relative flex h-[789px] shrink-0">
          <div className="absolute inset-y-0 -left-px w-[1280px] overflow-hidden"><Drawing /></div>
          <div className="relative flex w-[304px] flex-col justify-between pb-1 pl-1 pt-[3px]">
            <BrowserPanel />
            <div className="flex h-[25px] items-center border-b border-l border-r border-[#c4c4c4] bg-[#f1f1f1] pl-6 pr-[11px] font-[Roboto,sans-serif] text-[11px] text-[#555]">
              <span className="flex-1 pt-0.5 tracking-[-0.45px]">COMMENTS</span>
              <Round plus />
            </div>
          </div>
          <div className="relative flex flex-1 items-end pb-[6px] pl-[218px]">
            <NavBar />
          </div>
          <div className="relative flex w-[253px] flex-col pt-6">
            <div className="pl-[148px]"><ViewCube /></div>
            <div className="mt-[19px]"><Palette /></div>
          </div>
        </div>
        <Timeline />
      </div>
      <div className="h-1 shrink-0 bg-[#232323]" />
      <Taskbar />
    </div>
  );
}
